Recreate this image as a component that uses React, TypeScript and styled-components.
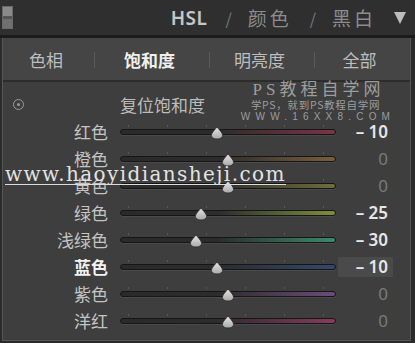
import React from "react";
import styled, { createGlobalStyle } from "styled-components";

const Global = createGlobalStyle`
  html, body { margin: 0; padding: 0; background: #2b2b2b; }
  #root { width: 415px; height: 343px; overflow: hidden; }
  * { box-sizing: border-box; }
`;

const CJK = `"Noto Sans CJK SC", "Noto Sans", sans-serif`;

const Frame = styled.div`
  position: relative;
  width: 415px;
  height: 343px;
  background: #2b2b2b;
  display: flex;
  flex-direction: column;
  font-family: ${CJK};
`;

const Header = styled.div`
  height: 38px;
  flex: none;
  background: #2f2f2f;
  border-bottom: 3px solid #1c1c1c;
  display: flex;
  align-items: center;
  padding: 0 9px 0 2px;
`;

const PanelIcon = styled.div`
  width: 11px;
  height: 23px;
  border: 1px solid #6a6a6a;
  background: linear-gradient(#8a8a8a 0 45%, #555 45% 55%, #707070 55% 100%);
`;

const Nav = styled.div`
  margin-left: auto;
  display: flex;
  align-items: center;
`;

const NavItem = styled.span<{ $active?: boolean }>`
  font-size: ${(p) => (p.$active ? "19px" : "19px")};
  color: ${(p) => (p.$active ? "#c6c6c6" : "#8c8c8c")};
  font-family: ${(p) => (p.$active ? `"Noto Sans", ${CJK}` : CJK)};
  font-weight: ${(p) => (p.$active ? 600 : 400)};
  letter-spacing: ${(p) => (p.$active ? "0.5px" : "3px")};
`;

const Slash = styled.span`
  color: #7a7a7a;
  margin: 0 16px 0 18px;
  font-size: 16px;
`;

const Caret = styled.span`
  margin-left: 18px;
  width: 0;
  height: 0;
  border-left: 6.5px solid transparent;
  border-right: 6.5px solid transparent;
  border-top: 12px solid #bdbdbd;
`;

const Panel = styled.div`
  flex: 1;
  margin: 0 4px 2px 2px;
  border: 1px solid #565656;
  border-top: none;
  background: #3e3e3e;
  display: flex;
  flex-direction: column;
`;

const Tabs = styled.div`
  height: 44px;
  flex: none;
  background: #454545;
  border-bottom: 2px solid #2c2c2c;
  display: grid;
  grid-template-columns: 92px 115px 105px 1fr;
  align-items: center;
`;

const Tab = styled.div<{ $active?: boolean; $sep?: boolean }>`
  position: relative;
  text-align: center;
  padding-right: 6px;
  font-size: 17px;
  color: ${(p) => (p.$active ? "#efefef" : "#bdbdbd")};
  font-weight: ${(p) => (p.$active ? 600 : 400)};
  &::after {
    content: "";
    display: ${(p) => (p.$sep ? "block" : "none")};
    position: absolute;
    right: 0;
    top: 5px;
    width: 1px;
    height: 16px;
    background: #5a5a5a;
  }
`;

const Body = styled.div`
  padding-top: 9px;
  display: flex;
  flex-direction: column;
`;

const Row = styled.div`
  height: 27px;
  display: grid;
  grid-template-columns: 115px 216px 55px;
  column-gap: 2px;
  align-items: center;
`;

const ResetCell = styled.div`
  display: flex;
  align-items: center;
  padding-left: 10px;
`;

const ResetIcon = styled.div`
  width: 11px;
  height: 11px;
  border-radius: 50%;
  border: 1.5px solid #9a9a9a;
  display: flex;
  align-items: center;
  justify-content: center;
  &::after {
    content: "";
    width: 3px;
    height: 3px;
    border-radius: 50%;
    background: #9a9a9a;
  }
`;

const ResetLabel = styled.div`
  font-size: 17px;
  color: #bcbcbc;
  white-space: nowrap;
`;

const Label = styled.div<{ $active?: boolean }>`
  text-align: right;
  padding-right: 10px;
  font-size: 17px;
  color: ${(p) => (p.$active ? "#f2f2f2" : "#c4c4c4")};
  font-weight: ${(p) => (p.$active ? 700 : 400)};
`;

const TrackWrap = styled.div`
  position: relative;
  height: 14px;
  display: flex;
  align-items: center;
`;

const Ticks = styled.div`
  position: absolute;
  left: 8px;
  right: 10px;
  top: 0;
  height: 2px;
  background: repeating-linear-gradient(
    to right,
    #585858 0 1px,
    transparent 1px 39px
  );
`;

const Track = styled.div<{ $color: string }>`
  width: 100%;
  height: 6px;
  border-radius: 3px;
  border: 1px solid #161616;
  background: linear-gradient(
    to right,
    #2a2a2a 0%,
    #2c2c2c 45%,
    ${(p) => p.$color} 100%
  );
  box-shadow: 0 1px 0 #4a4a4a;
`;

const Thumb = styled.svg`
  position: absolute;
  top: 1px;
  width: 14px;
  height: 14px;
  margin-left: -7px;
`;

const Value = styled.div<{ $zero?: boolean; $selected?: boolean }>`
  text-align: right;
  padding-right: 5px;
  height: 20px;
  line-height: 20px;
  font-family: "Noto Sans", "Open Sans", sans-serif;
  font-size: 17px;
  font-weight: ${(p) => (p.$zero ? 400 : 600)};
  color: ${(p) => (p.$zero ? "#7a7a7a" : "#e6e6e6")};
  background: ${(p) => (p.$selected ? "#4a4a4a" : "transparent")};
  white-space: nowrap;
`;

const WatermarkTop = styled.div`
  position: absolute;
  left: 243px;
  top: 80px;
  width: 145px;
  display: flex;
  flex-direction: column;
  align-items: center;
  color: rgba(195, 195, 195, 0.72);
  pointer-events: none;
`;

const WmTitle = styled.div`
  font-family: "Liberation Serif", "Noto Sans CJK SC", serif;
  font-size: 17px;
  line-height: 19px;
  letter-spacing: 4px;
  margin-left: 6px;
`;

const WmSub = styled.div`
  font-family: "Noto Sans CJK SC", sans-serif;
  font-size: 10.5px;
  line-height: 12px;
  letter-spacing: 0.7px;
`;

const WmUrl = styled.div`
  font-family: "Liberation Sans", sans-serif;
  font-size: 10px;
  line-height: 11px;
  letter-spacing: 5.2px;
  margin-left: 5px;
`;

const WatermarkSite = styled.div`
  position: absolute;
  left: 5px;
  top: 164px;
  font-family: "DejaVu Serif", "Liberation Serif", serif;
  font-size: 20px;
  line-height: 20px;
  letter-spacing: 1.4px;
  color: #e2e2e2;
  border-bottom: 1.5px solid #dcdcdc;
  padding-bottom: 0;
  pointer-events: none;
`;

type Item = { label: string; value: number; color: string; selected?: boolean };

const items: Item[] = [
  { label: "红色", value: -10, color: "#7a3446" },
  { label: "橙色", value: 0, color: "#7a5e3c" },
  { label: "黄色", value: 0, color: "#6f6e3c" },
  { label: "绿色", value: -25, color: "#7d8f3a" },
  { label: "浅绿色", value: -30, color: "#3c8a6a" },
  { label: "蓝色", value: -10, color: "#34476e", selected: true },
  { label: "紫色", value: 0, color: "#6e4a7c" },
  { label: "洋红", value: 0, color: "#8a3a5e" },
];

const fmt = (v: number) => (v < 0 ? `\u2013 ${Math.abs(v)}` : `${v}`);

function ThumbIcon({ pct }: { pct: number }) {
  return (
    <Thumb viewBox="0 0 14 14" style={{ left: `${pct}%` }}>
      <defs>
        <linearGradient id="tg" x1="0" y1="0" x2="0" y2="1">
          <stop offset="0" stopColor="#e8e8e8" />
          <stop offset="1" stopColor="#a8a8a8" />
        </linearGradient>
      </defs>
      <path
        d="M7 0.8 C8.2 3 12.6 6.5 12.6 9.2 C12.6 11.8 10.2 13 7 13 C3.8 13 1.4 11.8 1.4 9.2 C1.4 6.5 5.8 3 7 0.8 Z"
        fill="url(#tg)"
        stroke="#2a2a2a"
        strokeWidth="0.8"
      />
    </Thumb>
  );
}

export default function App() {
  return (
    <>
      <Global />
      <Frame>
        <Header>
          <PanelIcon />
          <Nav>
            <NavItem $active>HSL</NavItem>
            <Slash>/</Slash>
            <NavItem>颜色</NavItem>
            <Slash>/</Slash>
            <NavItem>黑白</NavItem>
            <Caret />
          </Nav>
        </Header>
        <Panel>
          <Tabs>
            <Tab $sep>色相</Tab>
            <Tab $active $sep>饱和度</Tab>
            <Tab $sep>明亮度</Tab>
            <Tab>全部</Tab>
          </Tabs>
          <Body>
            <Row>
              <ResetCell>
                <ResetIcon />
              </ResetCell>
              <ResetLabel>复位饱和度</ResetLabel>
            </Row>
            {items.map((it) => (
              <Row key={it.label}>
                <Label $active={it.selected}>{it.label}</Label>
                <TrackWrap>
                  <Ticks />
                  <Track $color={it.color} />
                  <ThumbIcon pct={50 + it.value / 2} />
                </TrackWrap>
                <Value $zero={it.value === 0} $selected={it.selected}>
                  {fmt(it.value)}
                </Value>
              </Row>
            ))}
          </Body>
        </Panel>
        <WatermarkTop>
          <WmTitle>PS教程自学网</WmTitle>
          <WmSub>学PS，就到PS教程自学网</WmSub>
          <WmUrl>WWW.16XX8.COM</WmUrl>
        </WatermarkTop>
        <WatermarkSite>www.haoyidiansheji.com</WatermarkSite>
      </Frame>
    </>
  );
}
